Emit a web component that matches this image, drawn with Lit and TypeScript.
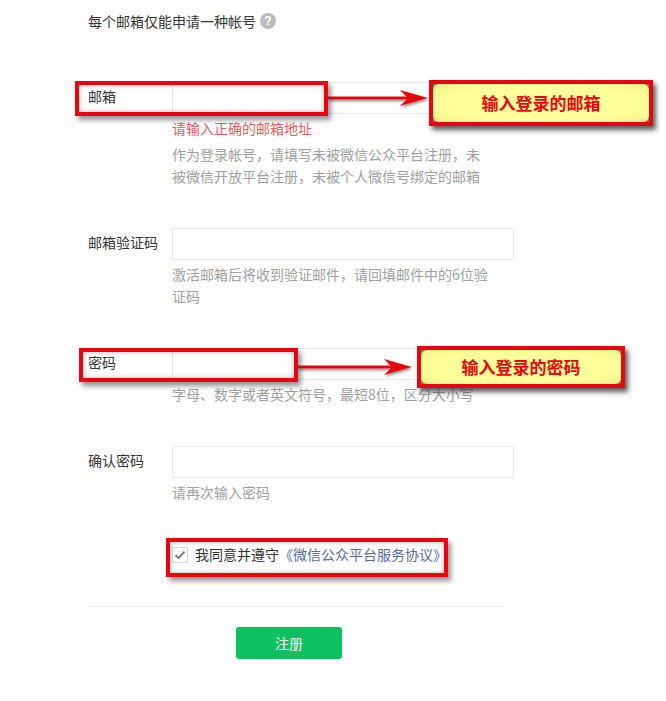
import { LitElement, html, css, svg } from "lit";
import { customElement } from "lit/decorators.js";

@customElement("app-root")
export class AppRoot extends LitElement {
  static styles = css`
    :host {
      display: block;
      position: relative;
      width: 666px;
      height: 701px;
      overflow: hidden;
      background: #fff;
      font-family: "Noto Sans CJK SC", "Liberation Sans", sans-serif;
      font-size: 14px;
      line-height: 22px;
      color: #353535;
    }
    .form {
      display: flex;
      flex-direction: column;
      padding: 10px 0 0 88px;
    }
    .intro {
      display: flex;
      align-items: center;
      gap: 4px;
      margin-bottom: 50px;
    }
    .help {
      width: 16px;
      height: 16px;
      border-radius: 50%;
      background: #bdbdbd;
      color: #fff;
      font: bold 12px/16px "Liberation Sans", sans-serif;
      text-align: center;
    }
    .fields {
      display: flex;
      flex-direction: column;
      gap: 40px;
    }
    .row {
      display: grid;
      grid-template-columns: 84px 342px;
    }
    .label {
      line-height: 28px;
    }
    .body {
      display: flex;
      flex-direction: column;
      gap: 4px;
    }
    input.text {
      box-sizing: border-box;
      display: block;
      width: 342px;
      height: 32px;
      margin: 0;
      border: 1px solid #e7e7eb;
      background: #fff;
      outline: none;
    }
    .error {
      color: #e15f63;
      margin: -1px 0 1px;
    }
    .tip {
      width: 318px;
      color: #a0a0a0;
      margin: -1px 0 1px;
    }
    .tip.wide {
      width: 342px;
    }
    .agree {
      display: flex;
      align-items: center;
      margin-left: 84px;
      gap: 7px;
      height: 22px;
    }
    .agree-text {
      line-height: 20px;
      height: 22px;
    }
    .check {
      box-sizing: border-box;
      width: 16px;
      height: 16px;
      border: 1px solid #d9dadc;
      display: flex;
      align-items: center;
      justify-content: center;
    }
    .link {
      color: #576b95;
    }
    .rule {
      width: 416px;
      height: 1px;
      background: #e7e7eb;
      margin-top: 40px;
    }
    .submit {
      box-sizing: border-box;
      width: 106px;
      height: 32px;
      margin: 20px 0 0 148px;
      border: 0;
      border-radius: 3px;
      background: #0cc160;
      color: #fff;
      font: inherit;
      line-height: 32px;
      padding: 0;
      text-align: center;
    }
    .mark {
      position: absolute;
      box-sizing: border-box;
      border: 4px solid #e8050f;
      box-shadow: 3px 4px 5px rgba(60, 60, 60, 0.55);
    }
    .m-email { left: 75px; top: 81px; width: 253px; height: 35px; }
    .m-pass { left: 79px; top: 348px; width: 219px; height: 34px; }
    .m-agree { left: 166px; top: 538px; width: 282px; height: 39px; }
    .inset {
      position: absolute;
      inset: 0;
      box-shadow: inset 0 0 5px rgba(90, 90, 90, 0.45);
    }
    .callout {
      position: absolute;
      box-sizing: border-box;
      border: 4px solid #e8050f;
      background: #77776a;
      box-shadow: 3px 4px 5px rgba(50, 50, 50, 0.8);
      display: flex;
    }
    .c-email { left: 429px; top: 80px; width: 224px; height: 46px; }
    .c-pass { left: 417px; top: 346px; width: 208px; height: 42px; }
    .callout span {
      flex: 1;
      border-radius: 6px;
      background: radial-gradient(ellipse at center, #ffff9c 60%, #f8f890 85%, #e4e484 100%);
      color: #e8050f;
      font-weight: 700;
      font-size: 17px;
      display: flex;
      align-items: center;
      justify-content: center;
    }
    .arrows {
      position: absolute;
      left: 0;
      top: 0;
      pointer-events: none;
    }
  `;

  private arrow(x1: number, x2: number, y: number) {
    return svg`
      <g filter="url(#s)">
        <rect x=${x1} y=${y - 1.5} width=${x2 - x1 - 20} height="3" fill="#e8050f"></rect>
        <polygon points="${x2 - 28},${y - 8} ${x2},${y} ${x2 - 28},${y + 8} ${x2 - 20},${y}" fill="#e8050f"></polygon>
      </g>`;
  }

  render() {
    return html`
      <div class="form">
        <div class="intro">每个邮箱仅能申请一种帐号 <span class="help">?</span></div>
        <div class="fields">
          <div class="row">
            <div class="label">邮箱</div>
            <div class="body">
              <input class="text" type="text" />
              <div class="error">请输入正确的邮箱地址</div>
              <div class="tip">作为登录帐号，请填写未被微信公众平台注册，未被微信开放平台注册，未被个人微信号绑定的邮箱</div>
            </div>
          </div>
          <div class="row">
            <div class="label">邮箱验证码</div>
            <div class="body">
              <input class="text" type="text" />
              <div class="tip">激活邮箱后将收到验证邮件，请回填邮件中的6位验证码</div>
            </div>
          </div>
          <div class="row">
            <div class="label">密码</div>
            <div class="body">
              <input class="text" type="text" />
              <div class="tip wide">字母、数字或者英文符号，最短8位，区分大小写</div>
            </div>
          </div>
          <div class="row">
            <div class="label">确认密码</div>
            <div class="body">
              <input class="text" type="text" />
              <div class="tip">请再次输入密码</div>
            </div>
          </div>
          <div class="agree">
            <span class="check">
              <svg width="12" height="10" viewBox="0 0 12 10">
                <path d="M1.5 5.2 L4.6 8 L10.5 1.6" fill="none" stroke="#7d7d7d" stroke-width="2"></path>
              </svg>
            </span>
            <span class="agree-text">我同意并遵守<span class="link">《微信公众平台服务协议》</span></span>
          </div>
        </div>
        <div class="rule"></div>
        <button class="submit">注册</button>
      </div>

      <svg class="arrows" width="666" height="701" viewBox="0 0 666 701">
        <defs>
          <filter id="s" x="-5%" y="-60%" width="110%" height="220%">
            <feDropShadow dx="1" dy="2" stdDeviation="1.2" flood-color="#555" flood-opacity="0.6"></feDropShadow>
          </filter>
        </defs>
        ${this.arrow(328, 428, 98)}
        ${this.arrow(298, 412, 367)}
      </svg>

      <div class="mark m-email"><div class="inset"></div></div>
      <div class="mark m-pass"><div class="inset"></div></div>
      <div class="mark m-agree"><div class="inset"></div></div>
      <div class="callout c-email"><span>输入登录的邮箱</span></div>
      <div class="callout c-pass"><span>输入登录的密码</span></div>
    `;
  }
}
